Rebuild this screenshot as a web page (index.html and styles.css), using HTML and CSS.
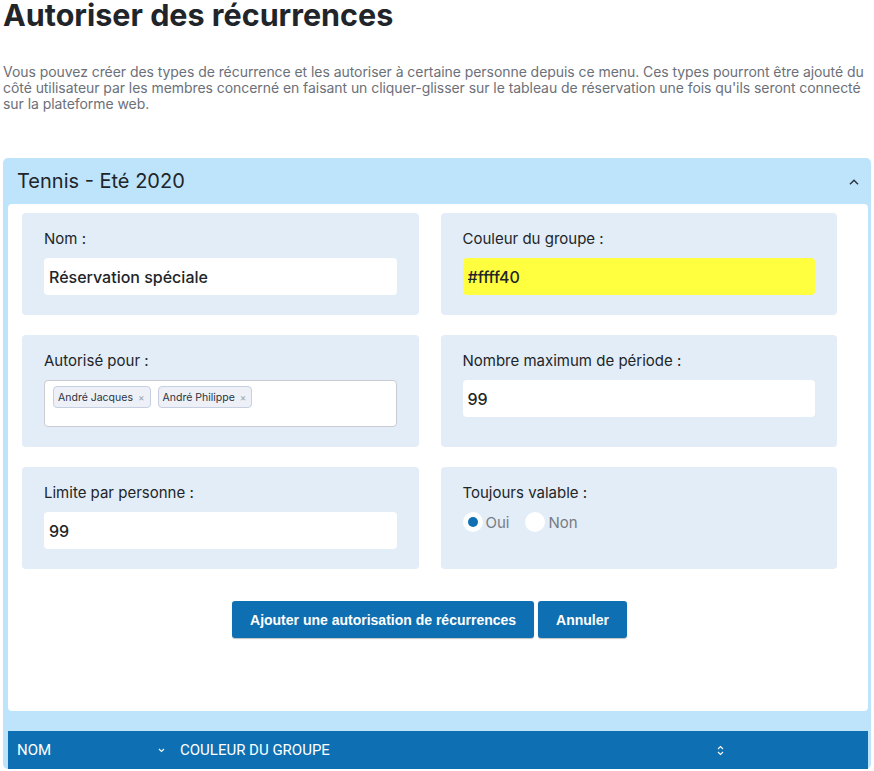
FILE: index.html
```html
<!DOCTYPE html>
<html lang="fr">
<head>
    <meta charset="UTF-8">
    <meta name="viewport" content="width=device-width, initial-scale=1.0">
    <title>Autoriser des récurrences</title>
    <link rel="stylesheet" href="styles.css">
</head>
<body>
    <h1 class="page-title">Autoriser des récurrences</h1>

    <p class="intro">Vous pouvez créer des types de récurrence et les autoriser à certaine personne depuis ce menu. Ces types pourront être ajouté du côté utilisateur par les membres concerné en faisant un cliquer-glisser sur le tableau de réservation une fois qu'ils seront connecté sur la plateforme web.</p>

    <div class="group-panel">
        <div class="panel-header">
            <span>Tennis - Eté 2020</span>
            <svg class="chevron" width="10" height="6" viewBox="0 0 10 6"><path d="M1 5.2 5 1.2 9 5.2" fill="none" stroke="#2b3440" stroke-width="1.5"/></svg>
        </div>

        <div class="panel-body">
            <form class="form-grid">
                <div class="field-box">
                    <label>Nom :</label>
                    <input type="text" class="text-input" value="Réservation spéciale">
                </div>

                <div class="field-box">
                    <label>Couleur du groupe :</label>
                    <input type="text" class="text-input color-input" value="#ffff40">
                </div>

                <div class="field-box">
                    <label>Autorisé pour :</label>
                    <div class="multi-select">
                        <span class="tag">André Jacques <span class="tag-x">×</span></span>
                        <span class="tag">André Philippe <span class="tag-x">×</span></span>
                    </div>
                </div>

                <div class="field-box">
                    <label>Nombre maximum de période :</label>
                    <input type="text" class="text-input" value="99">
                </div>

                <div class="field-box">
                    <label>Limite par personne :</label>
                    <input type="text" class="text-input" value="99">
                </div>

                <div class="field-box">
                    <label>Toujours valable :</label>
                    <div class="radio-row">
                        <span class="radio checked"></span><span class="radio-label">Oui</span>
                        <span class="radio"></span><span class="radio-label">Non</span>
                    </div>
                </div>

                <div class="form-actions">
                    <button type="button" class="btn">Ajouter une autorisation de récurrences</button>
                    <button type="button" class="btn">Annuler</button>
                </div>
            </form>
        </div>

        <div class="table-head">
            <div class="th th-name">NOM
                <svg width="7" height="5" viewBox="0 0 7 5"><path d="M1 1 3.5 3.5 6 1" fill="none" stroke="#fff" stroke-width="1.1"/></svg>
            </div>
            <div class="th th-color">COULEUR DU GROUPE
                <svg width="7" height="11" viewBox="0 0 7 11"><path d="M1 4 3.5 1.5 6 4M1 7 3.5 9.5 6 7" fill="none" stroke="#fff" stroke-width="1.1"/></svg>
            </div>
            <div class="th"></div>
        </div>
    </div>
</body>
</html>
```

FILE: styles.css
```css
* {
    margin: 0;
    padding: 0;
    box-sizing: border-box;
}

body {
    font-family: Inter, 'Noto Sans', sans-serif;
    color: #212529;
    background: #fff;
    padding: 0 3px;
    overflow: hidden;
}

.page-title {
    font-size: 30.5px;
    font-weight: 700;
    line-height: 29px;
}

.intro {
    color: #6c7079;
    font-size: 14px;
    line-height: 16px;
    letter-spacing: -0.06px;
    margin-top: 35px;
}

.group-panel {
    background: #bee4fc;
    border-radius: 5px;
    margin-top: 46px;
    padding: 0 3px 0 5px;
}

.panel-header {
    height: 46px;
    display: flex;
    align-items: center;
    justify-content: space-between;
    padding: 0 9px 0 9px;
    font-size: 20px;
}

.chevron {
    margin-top: 2px;
}

.panel-body {
    background: #fff;
    border-radius: 4px;
    padding: 9px 31px 73px 14px;
}

.form-grid {
    display: grid;
    grid-template-columns: 1fr 1fr;
    gap: 20px 22px;
}

.field-box {
    background: #e3edf7;
    border-radius: 4px;
    padding: 17px 22px 20px;
}

.field-box label {
    display: block;
    font-size: 15px;
    line-height: 18px;
    margin-bottom: 10px;
}

.text-input {
    width: 100%;
    height: 37px;
    border: none;
    border-radius: 4px;
    background: #fff;
    padding: 0 5px;
    font-family: inherit;
    font-size: 16px;
    font-weight: 500;
    color: #212529;
}

.color-input {
    background: #ffff40;
}

.multi-select {
    height: 47px;
    background: #fff;
    border: 1px solid #c9ccd1;
    border-radius: 4px;
    padding: 5px 8px;
    display: flex;
    align-items: flex-start;
    gap: 7px;
}

.tag {
    display: inline-flex;
    align-items: center;
    height: 22px;
    padding: 0 5px 0 4px;
    background: #edf1f7;
    border: 1px solid #c6d0e0;
    border-radius: 4px;
    font-size: 10.5px;
    color: #2a3342;
}

.tag-x {
    color: #9aa3b1;
    font-size: 10px;
    margin-left: 5px;
}

.radio-row {
    display: flex;
    align-items: center;
    height: 20px;
}

.radio {
    width: 20px;
    height: 20px;
    border-radius: 50%;
    background: #fff;
    position: relative;
}

.radio.checked::after {
    content: "";
    position: absolute;
    left: 5px;
    top: 5px;
    width: 10px;
    height: 10px;
    border-radius: 50%;
    background: #0f6fb2;
}

.radio-label {
    color: #777c84;
    font-size: 15px;
    margin: 0 16px 0 3px;
}

.form-actions {
    grid-column: 1 / 3;
    display: flex;
    justify-content: center;
    gap: 4px;
    margin-top: 12px;
}

.btn {
    background: #0e70b2;
    color: #fff;
    border: none;
    border-radius: 3px;
    height: 37px;
    padding: 0 18px;
    font-family: 'Liberation Sans', Arial, sans-serif;
    font-weight: 700;
    font-size: 14px;
    box-shadow: 0 1px 1px rgba(0, 0, 0, 0.25);
}

.table-head {
    margin-top: 20px;
    background: #0e70b2;
    height: 38px;
    display: grid;
    grid-template-columns: 163px 559px 1fr;
    font-family: Roboto, sans-serif;
    font-size: 15px;
    color: #fff;
}

.th {
    display: flex;
    align-items: center;
    justify-content: space-between;
    padding: 0 6px 0 9px;
}
```
